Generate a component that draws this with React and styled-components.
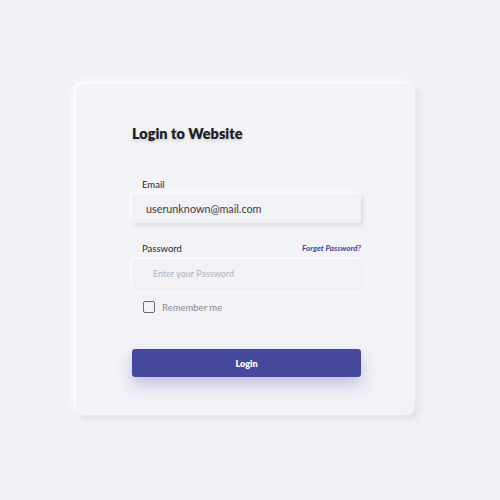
import React from 'react';
import styled, { createGlobalStyle } from 'styled-components';

const GlobalStyle = createGlobalStyle`
  html, body {
    margin: 0;
    background: #f0f0f5;
    font-family: "Lato", "Inter", sans-serif;
  }
`;

const Page = styled.div`
  min-height: 500px;
  padding: 84px 0 0 76px;
  box-sizing: border-box;
`;

const Card = styled.form`
  width: 339px;
  height: 331px;
  box-sizing: border-box;
  padding: 41px 54px 0 56px;
  background: #f2f2f7;
  border-radius: 8px;
  box-shadow: -3px -3px 6px #ffffff, 3px 3px 7px rgba(60, 60, 90, 0.1);
  display: flex;
  flex-direction: column;
`;

const Title = styled.h1`
  margin: 0;
  font-size: 14.5px;
  line-height: 18px;
  font-weight: 800;
  color: #1f1f24;
  text-shadow: 0 2px 3px rgba(0, 0, 0, 0.15);
`;

const LabelRow = styled.div`
  display: flex;
  justify-content: space-between;
  align-items: center;
  padding-left: 10px;
  margin-top: ${p => p.$top}px;
  height: 12px;
`;

const Label = styled.label`
  font-size: 9.5px;
  color: #26262b;
`;

const Forgot = styled.a`
  font-size: 8px;
  font-style: italic;
  font-weight: 700;
  color: #44469a;
`;

const Input = styled.input`
  margin-top: ${p => p.$top}px;
  height: 29px;
  box-sizing: border-box;
  border: none;
  outline: none;
  border-radius: 3px;
  background: #f1f1f6;
  font-family: inherit;
  padding: 0 0 0 ${p => (p.$raised ? 14 : 21)}px;
  font-size: ${p => (p.$raised ? 10.8 : 9)}px;
  color: #3a3a42;
  box-shadow: ${p =>
    p.$raised
      ? '-2px -2px 4px #ffffff, 2px 2px 4px rgba(40, 40, 70, 0.14)'
      : '-1px -1px 2px #ffffff, 1px 1px 2px rgba(40, 40, 70, 0.05)'};

  &::placeholder {
    color: #b3b3bb;
  }
`;

const CheckRow = styled.label`
  display: flex;
  align-items: center;
  gap: 7px;
  margin-top: 13px;
  padding-left: 11px;
  font-size: 9.5px;
  color: #8a8a92;
`;

const Box = styled.span`
  width: 12px;
  height: 12px;
  box-sizing: border-box;
  border: 1px solid #6a6a70;
  border-radius: 2px;
`;

const Button = styled.button`
  margin-top: 36px;
  height: 28px;
  border: none;
  border-radius: 3px;
  background: #46489d;
  color: #ffffff;
  font-family: inherit;
  font-size: 9px;
  font-weight: 800;
  box-shadow: 0 8px 16px rgba(70, 72, 157, 0.28);
  cursor: pointer;
`;

const App = () => (
  <Page>
    <GlobalStyle />
    <Card onSubmit={e => e.preventDefault()}>
      <Title>Login to Website</Title>
      <LabelRow $top={35}>
        <Label>Email</Label>
      </LabelRow>
      <Input $raised $top={4} defaultValue="userunknown@mail.com" />
      <LabelRow $top={19}>
        <Label>Password</Label>
        <Forgot>Forget Password?</Forgot>
      </LabelRow>
      <Input $top={5} type="password" placeholder="Enter your Password" />
      <CheckRow>
        <Box />
        Remember me
      </CheckRow>
      <Button>Login</Button>
    </Card>
  </Page>
);

export default App;
